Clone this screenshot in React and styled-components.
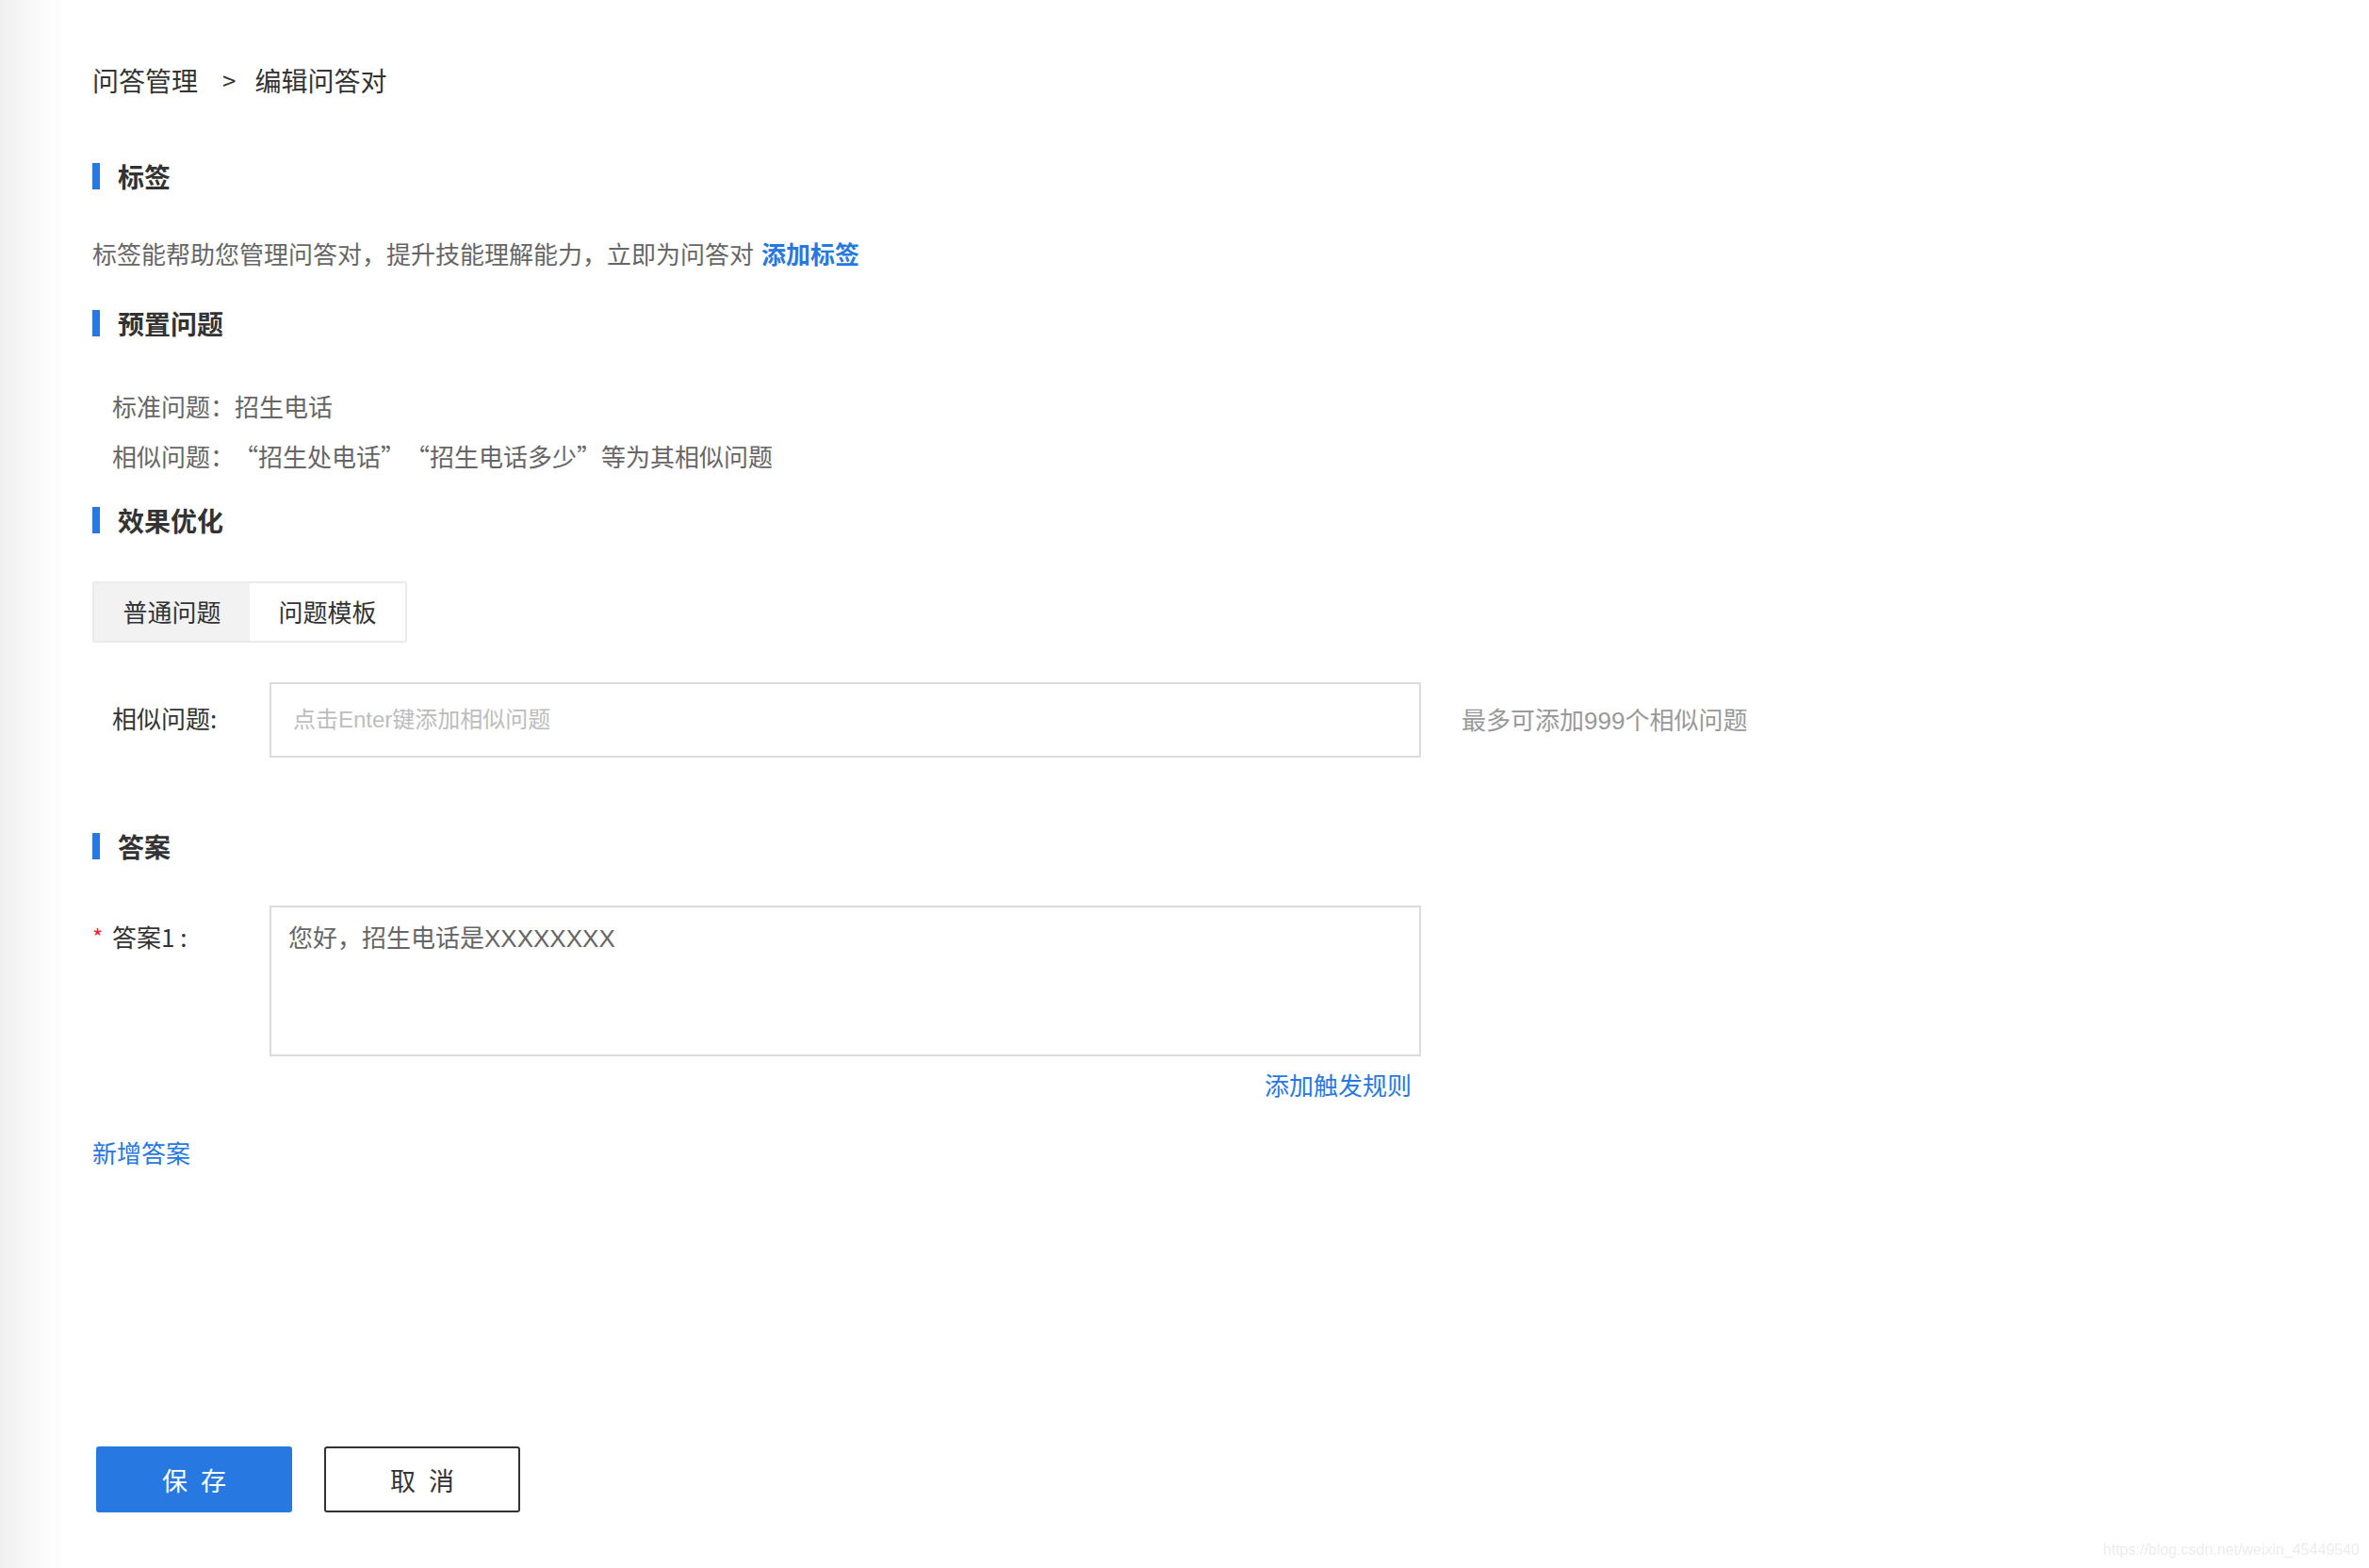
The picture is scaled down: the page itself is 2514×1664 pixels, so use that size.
import React from 'react';
import styled, { createGlobalStyle } from 'styled-components';

const BLUE = '#2878e1';
const LATIN = '"Liberation Sans", "Noto Sans CJK SC", sans-serif';

const GlobalStyle = createGlobalStyle`
  html, body {
    margin: 0;
    padding: 0;
  }

  body {
    min-height: 100vh;
    background: linear-gradient(to right, #f0f0f0 0, #f7f7f7 28px, #fdfdfd 56px, #fff 72px);
    font-family: "Noto Sans CJK SC", "Noto Sans", sans-serif;
    color: #333;
  }
`;

const Page = styled.div`
  padding: 65px 0 58px 98px;
`;

const Breadcrumb = styled.div`
  display: flex;
  align-items: center;
  font-size: 28px;
  line-height: 40px;
  color: #333;
`;

const Crumb = styled.span``;

const Arrow = styled.span`
  margin: 0 20px 0 26px;
  font-size: 26px;
`;

const SectionTitle = styled.h2`
  display: flex;
  align-items: center;
  height: 28px;
  margin: ${({ gap }) => gap}px 0 0;
  font-size: 28px;
  font-weight: 700;
  line-height: 28px;
  color: #333;

  &::before {
    content: '';
    width: 8px;
    height: 28px;
    margin-right: 19px;
    background: ${BLUE};
  }
`;

const Desc = styled.p`
  margin: 48px 0 0;
  font-size: 26px;
  line-height: 40px;
  color: #666;
`;

const Link = styled.a`
  margin-left: 8px;
  color: ${BLUE};
  font-weight: ${({ bold }) => (bold ? 700 : 400)};
  text-decoration: none;
  cursor: pointer;
`;

const Preset = styled.div`
  margin-top: 47px;
  padding-left: 21px;
  font-size: 26px;
  line-height: 53px;
  color: #666;
`;

const PresetLine = styled.div``;

const Quote = styled.span`
  margin-left: ${({ gap }) => gap}px;
`;

const Tabs = styled.div`
  display: inline-flex;
  margin-top: 51px;
  border: 2px solid #ebebeb;
  border-radius: 3px;
`;

const Tab = styled.div`
  width: 165px;
  height: 61px;
  padding-bottom: 3px;
  box-sizing: border-box;
  display: flex;
  align-items: center;
  justify-content: center;
  font-size: 26px;
  color: #333;
  background: ${({ active }) => (active ? '#f2f2f2' : '#fff')};
  cursor: pointer;
`;

const FormRow = styled.div`
  display: flex;
  align-items: ${({ top }) => (top ? 'flex-start' : 'center')};
  margin-top: ${({ gap }) => gap}px;
`;

const Label = styled.label`
  width: 188px;
  flex-shrink: 0;
  display: flex;
  align-items: center;
  padding-top: ${({ offset }) => offset || 0}px;
  padding-bottom: ${({ offset }) => (offset ? 0 : 4)}px;
  font-size: 26px;
  line-height: 40px;
  color: #333;
`;

const Star = styled.span`
  width: 21px;
  color: #f5222d;
  font-size: 24px;
`;

const LabelText = styled.span`
  padding-left: ${({ indent }) => (indent ? 21 : 0)}px;
`;

const TextInput = styled.input`
  box-sizing: border-box;
  width: 1222px;
  height: 80px;
  padding: 0 23px;
  border: 2px solid #dcdcdc;
  border-radius: 0;
  outline: none;
  font-family: ${LATIN};
  font-size: 24px;
  color: #333;

  &::placeholder {
    color: #bdbdbd;
  }
`;

const Hint = styled.span`
  margin-left: 43px;
  padding-bottom: 4px;
  font-family: ${LATIN};
  font-size: 26px;
  color: #999;
`;

const TextArea = styled.textarea`
  box-sizing: border-box;
  width: 1222px;
  height: 160px;
  padding: 13px 18px;
  border: 2px solid #dcdcdc;
  border-radius: 0;
  outline: none;
  resize: none;
  font-family: ${LATIN};
  font-size: 26px;
  line-height: 40px;
  color: #666;
`;

const RuleLine = styled.div`
  width: 1222px;
  margin: 10px 0 0 188px;
  padding-right: 10px;
  box-sizing: border-box;
  text-align: right;
  font-size: 26px;
  line-height: 40px;
`;

const AddAnswer = styled.div`
  margin-top: 32px;
  font-size: 26px;
  line-height: 40px;

  a {
    margin-left: 0;
  }
`;

const Actions = styled.div`
  display: flex;
  gap: 34px;
  margin: 292px 0 0 4px;
`;

const Button = styled.button`
  box-sizing: border-box;
  width: 208px;
  height: 70px;
  border: 2px solid ${({ primary }) => (primary ? BLUE : '#333')};
  border-radius: 3px;
  background: ${({ primary }) => (primary ? BLUE : '#fff')};
  color: ${({ primary }) => (primary ? '#fff' : '#333')};
  font-family: inherit;
  font-size: 27px;
  letter-spacing: 14px;
  text-indent: 14px;
  cursor: pointer;
`;

const Watermark = styled.div`
  position: fixed;
  right: 10px;
  bottom: 10px;
  font-family: "Liberation Sans", Arial, sans-serif;
  font-size: 16px;
  color: #ececec;
`;

export default function App() {
  return (
    <>
      <GlobalStyle />
      <Page>
        <Breadcrumb>
          <Crumb>问答管理</Crumb>
          <Arrow>&gt;</Arrow>
          <Crumb>编辑问答对</Crumb>
        </Breadcrumb>

        <SectionTitle gap={68}>标签</SectionTitle>
        <Desc>
          标签能帮助您管理问答对，提升技能理解能力，立即为问答对
          <Link bold>添加标签</Link>
        </Desc>

        <SectionTitle gap={40}>预置问题</SectionTitle>
        <Preset>
          <PresetLine>标准问题：招生电话</PresetLine>
          <PresetLine>
            相似问题：<Quote gap={12}>“招生处电话”</Quote>
            <Quote gap={13}>“招生电话多少”等为其相似问题</Quote>
          </PresetLine>
        </Preset>

        <SectionTitle gap={28}>效果优化</SectionTitle>
        <Tabs>
          <Tab active>普通问题</Tab>
          <Tab>问题模板</Tab>
        </Tabs>

        <FormRow gap={42}>
          <Label>
            <LabelText indent>相似问题:</LabelText>
          </Label>
          <TextInput placeholder="点击Enter键添加相似问题" />
          <Hint>最多可添加999个相似问题</Hint>
        </FormRow>

        <SectionTitle gap={80}>答案</SectionTitle>
        <FormRow gap={49} top>
          <Label offset={13}>
            <Star>*</Star>
            <LabelText>答案1 :</LabelText>
          </Label>
          <TextArea defaultValue="您好，招生电话是XXXXXXXX" />
        </FormRow>
        <RuleLine>
          <Link>添加触发规则</Link>
        </RuleLine>

        <AddAnswer>
          <Link>新增答案</Link>
        </AddAnswer>

        <Actions>
          <Button primary>保存</Button>
          <Button>取消</Button>
        </Actions>
      </Page>
      <Watermark>https://blog.csdn.net/weixin_45449540</Watermark>
    </>
  );
}
